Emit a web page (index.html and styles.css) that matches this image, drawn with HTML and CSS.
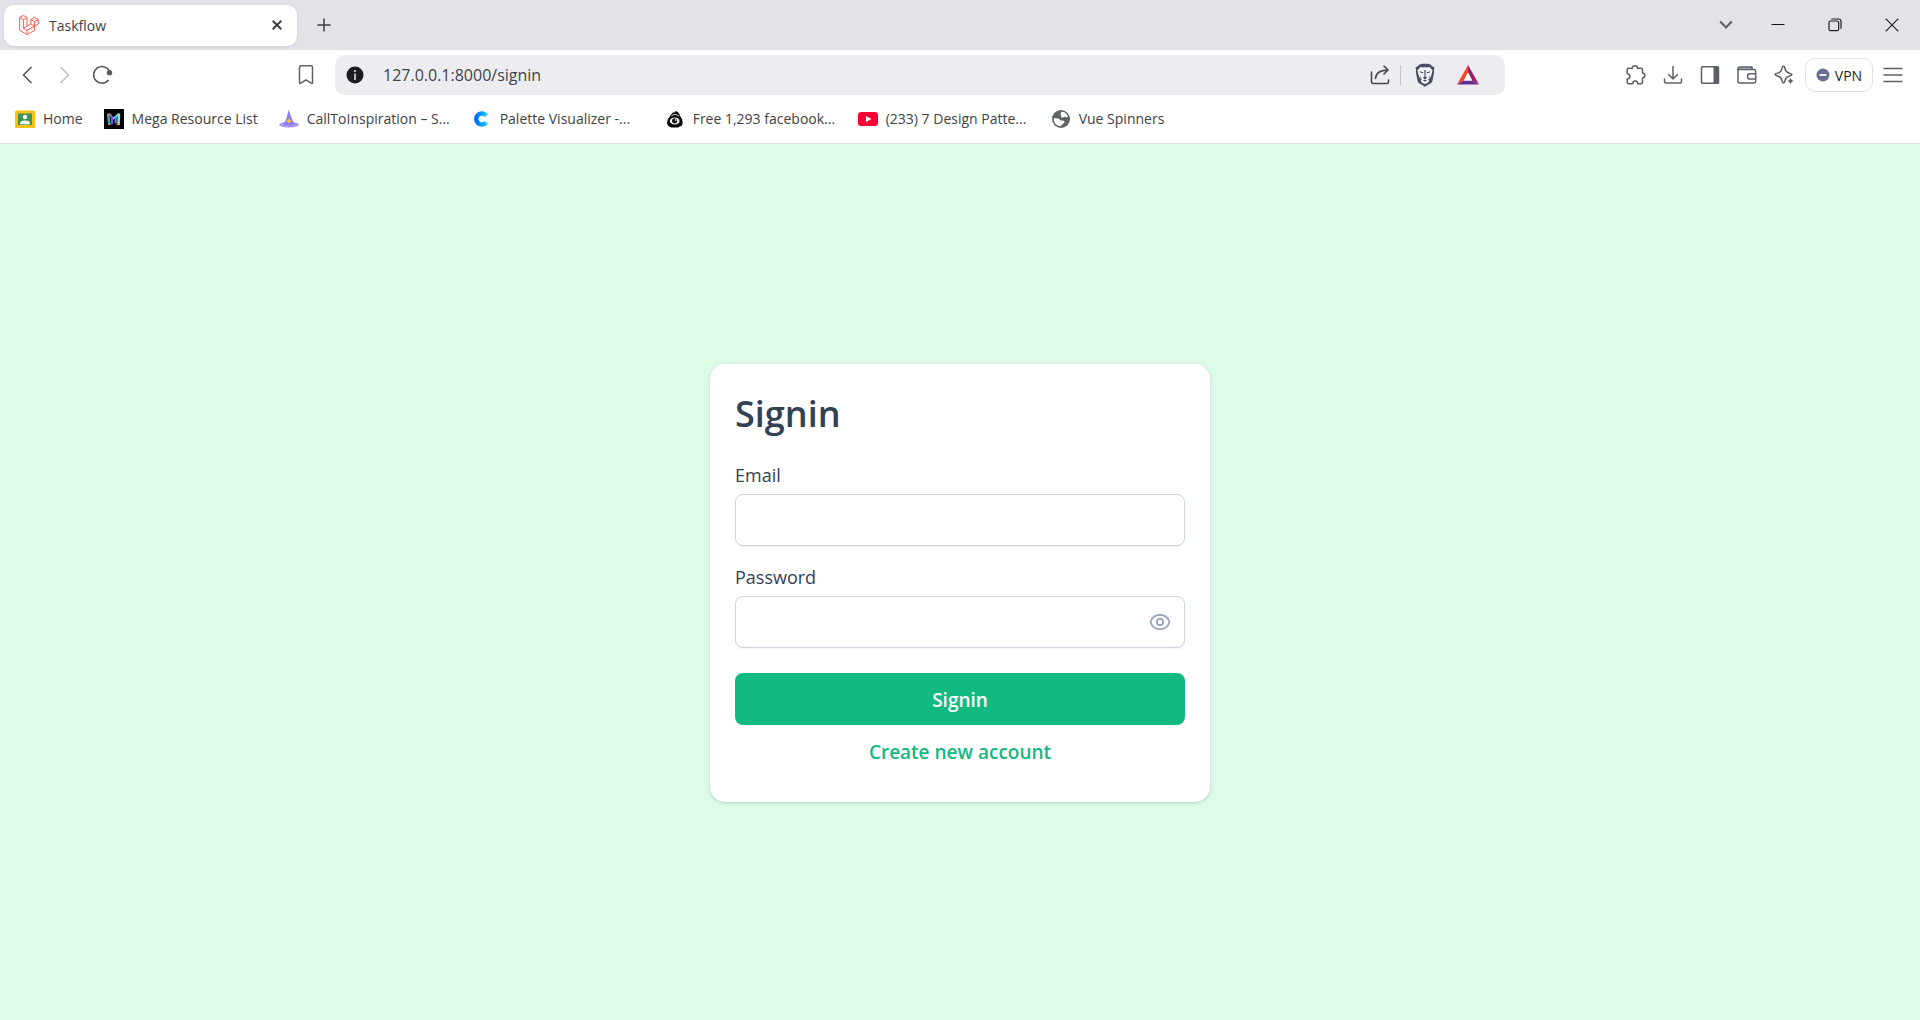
FILE: index.html
```html
<!DOCTYPE html>
<html lang="en">
<head>
<meta charset="utf-8">
<meta name="viewport" content="width=device-width, initial-scale=1">
<title>Taskflow</title>
<link rel="stylesheet" href="styles.css">
</head>
<body>
<div class="window">
  <header class="chrome">
    <div class="tabbar">
      <div class="tab">
        <svg class="icon-20" viewBox="0 0 24 24" fill="none" stroke="#ff4a3d" stroke-width="1.1" stroke-linejoin="round"><path d="M.8 3 5.2.5 9.7 3 5.2 5.6zM.8 3v15.4l8.9 5.1 9-5.1v-5.1l4.5-2.6V5.5l-4.5-2.6-4.5 2.6 4.5 2.6 4.5-2.6M14.200 5.500v5.200l4.500 2.600V8.100M9.700 3v10.300l4.500-2.600M5.200 5.600v10.300l4.500-2.600M5.200 15.900l4.500 2.500 9-5.100M9.700 18.400v5.100"/></svg>
        <span class="tab-title">Taskflow</span>
        <button class="tab-close" type="button" aria-label="Close tab"><svg width="10" height="10" viewBox="0 0 10 10" stroke="#3b3e43" stroke-width="2"><path d="M.7.7l8.600 8.600M9.300.7.7 9.300"/></svg></button>
      </div>
      <button class="tool" type="button" aria-label="New tab"><svg width="14" height="14" viewBox="0 0 14 14" stroke="#3b3e43" stroke-width="1.500"><path d="M7 .5v13M.5 7h13"/></svg></button>
      <div class="window-controls">
        <button class="control control-search" type="button" aria-label="Search tabs"><svg width="14" height="10" viewBox="0 0 14 10" fill="none" stroke="#5d6167" stroke-width="2.200"><path d="M1.200 1.500 7 7.500l5.800-6"/></svg></button>
        <button class="control" type="button" aria-label="Minimize"><svg width="14" height="14" viewBox="0 0 14 14" stroke="#111"><path d="M.5 6.500h13"/></svg></button>
        <button class="control" type="button" aria-label="Restore"><svg width="14" height="14" viewBox="0 0 14 14" fill="none" stroke="#222" stroke-width="1.200"><rect x="1" y="3" width="9.700" height="9.700" rx="1.500"/><path d="M3.200 1h7.300Q13 1 13 3.500v7.200"/></svg></button>
        <button class="control" type="button" aria-label="Close"><svg width="14" height="14" viewBox="0 0 14 14" stroke="#222" stroke-width="1.200"><path d="M.7.7l12.600 12.600M13.300.7.7 13.300"/></svg></button>
      </div>
    </div>

    <div class="toolbar">
      <button class="tool" type="button" aria-label="Back"><svg class="icon-20" viewBox="0 0 20 20" fill="none" stroke="#55585e" stroke-width="1.600"><path d="M14.500 2 6.500 10l8 8"/></svg></button>
      <button class="tool" type="button" aria-label="Forward"><svg class="icon-20" viewBox="0 0 20 20" fill="none" stroke="#bfc0c4" stroke-width="1.600"><path d="M5.500 2l8 8-8 8"/></svg></button>
      <button class="tool" type="button" aria-label="Reload"><svg class="icon-20" viewBox="0 0 20 20" fill="none" stroke="#55585e" stroke-width="1.600"><path d="M15.500 15A8.300 8.300 0 1 1 16.300 6"/><circle cx="16.500" cy="7.700" r="1.900" fill="#55585e" stroke="#55585e"/></svg></button>
      <div class="space-left"></div>
      <button class="tool" type="button" aria-label="Bookmark this page"><svg class="icon-20" viewBox="0 0 20 20" fill="none" stroke="#5d6167" stroke-width="1.500" stroke-linejoin="round"><path d="M3.500 2.300q0-1.500 1.500-1.500h10q1.500 0 1.500 1.500v15.200q0 1.500-1.300.7L10 14.800l-5.200 3.400q-1.300.8-1.300-.7z"/></svg></button>
      <div class="address">
        <button class="site-info" type="button" aria-label="Site information"><svg width="18" height="18" viewBox="0 0 18 18"><circle cx="9" cy="9" r="8.500" fill="#1b1b22"/><path d="M8 4h2v2H8zM8 7.500h2V14H8z" fill="#b9b9c0"/></svg></button>
        <input class="url" type="text" aria-label="Address" value="127.0.0.1:8000/signin">
        <button class="share" type="button" aria-label="Share"><svg class="icon-20" viewBox="0 0 20 20" fill="none" stroke="#46474d" stroke-width="1.600" stroke-linecap="round" stroke-linejoin="round"><path d="M1.500 7v10q0 1.500 1.500 1.500h14q1.500 0 1.500-1.500v-2M5.500 13.500Q6 5.500 17.500 5M14 1l4 4-4 4"/></svg></button>
        <span class="divider"></span>
        <button class="shield" type="button" aria-label="Brave Shields"><svg width="20" height="24" viewBox="0 0 20 24"><path d="M4.500 1.500 7 .8h6l2.500.7 2 2 2 .8-.6 3 .3 1.500-1.700 9q-.4 1.500-1.700 2.500L10 23.700l-5.800-3.400q-1.300-1-1.700-2.500l-1.700-9 .3-1.500-.6-3 2-.8z" fill="#4b4d63"/><path d="M5.500 4 8 4.500l2-.3 2 .3 2.500-.5 3 3.300-.4 2-1.300 4.600-2.600 2.600 1 1-1.200 2.200L10 21l-3-1.300-1.200-2.200 1-1-2.600-2.600-1.300-4.600-.4-2z" fill="#f5f5f8"/><path d="M4.500 8.200l4 1.100-.6 1-2.900-.8zM15.500 8.200l-4 1.100.6 1 2.900-.8zM9.300 7h1.400l-.2 6.500 1.800 1.200-2.300 1.500-2.300-1.500 1.800-1.200zM7.800 17.400l2.200-.8 2.200.8-2.200 1.200zM4.600 12l1.600 2.200-.8.3zM15.400 12l-1.600 2.200.8.3z" fill="#4b4d63"/></svg></button>
        <button class="tool" type="button" aria-label="Brave Rewards"><svg width="24" height="20" viewBox="0 0 24 20"><path d="M12 0 1 19.500 7.800 15.600 12 7.500z" fill="#ff4724"/><path d="M12 0l11 19.500-6.800-3.900L12 7.500z" fill="#9e1f63"/><path d="M1 19.500h22l-6.800-3.900H7.800z" fill="#662d91"/><path d="M12 7.500l4.200 8.100H7.800z" fill="#fff"/></svg></button>
      </div>
      <div class="space-right"></div>
      <div class="actions">
        <button class="action" type="button" aria-label="Extensions"><svg class="icon-20" viewBox="0 0 20 20" fill="none" stroke="#5d6167" stroke-width="1.500" stroke-linejoin="round"><path d="M1.200 4.500q0-1.300 1.300-1.300h3.800C6.300 0 11.500 0 11.500 3.200h3.700q1.300 0 1.300 1.300V8c3.200.3 3.200 4.600 0 5v4.200q0 1.500-1.500 1.500h-3.200c-.2-3.500-4.800-3.500-5 0H2.700q-1.500 0-1.500-1.500V14c3.600-.2 3.600-5 0-5.200z"/></svg></button>
        <button class="action" type="button" aria-label="Downloads"><svg class="icon-20" viewBox="0 0 20 20" fill="none" stroke="#5d6167" stroke-width="1.500" stroke-linecap="round" stroke-linejoin="round"><path d="M10 1.500V14M5.500 9.500 10 14l4.500-4.500M1.500 14v2.500q0 1.500 1.500 1.500h14q1.500 0 1.500-1.500V14"/></svg></button>
        <button class="action" type="button" aria-label="Sidebar"><svg class="icon-20" viewBox="0 0 20 20"><rect x="1.500" y="1.700" width="17" height="16.500" rx="1" fill="none" stroke="#5d6167" stroke-width="1.500"/><path d="M13.500 1.500h5v17h-5z" fill="#5d6167"/></svg></button>
        <button class="action" type="button" aria-label="Wallet"><svg class="icon-20" viewBox="0 0 20 20" fill="none" stroke="#5d6167" stroke-width="1.500" stroke-linejoin="round"><path d="M1 4.500V4q0-2 2-2h12v2.500" fill="#b9bbbf"/><path d="M1 4.500h16q1.700 0 1.700 1.700v10.100q0 1.700-1.700 1.700H3q-2 0-2-2V4.500zM18.700 8.700h-6q-2.200 0-2.200 2.700t2.200 2.700h6"/></svg></button>
        <button class="action" type="button" aria-label="Leo AI"><svg class="icon-20" viewBox="0 0 20 20" fill="none" stroke="#5d6167" stroke-width="1.500" stroke-linejoin="round"><path d="M9.500 1.300q1.200 0 1.600 2.500.7 3.600 4.300 4.400 2.600.6 2.600 1.400t-2.500 1.400q-3.700.9-4.400 4.300-.5 2.600-1.600 2.600t-1.600-2.600q-.7-3.500-4.400-4.300Q1 10.500 1 9.600t2.600-1.400q3.500-.8 4.300-4.400.5-2.500 1.600-2.500z"/><path d="M16.500 12l1.200 2.800 2.300 1.200-2.300 1.200-1.200 2.800-1.200-2.800L13 16l2.300-1.200z" fill="#5d6167" stroke="#fff" stroke-width=".5"/></svg></button>
      </div>
      <button class="vpn" type="button"><svg width="14" height="14" viewBox="0 0 14 14"><circle cx="7" cy="7" r="6.500" fill="#6b6f8d"/><path d="M3.500 7h7" stroke="#fff" stroke-width="1.800"/></svg>VPN</button>
      <button class="tool" type="button" aria-label="Menu"><svg class="icon-20" viewBox="0 0 20 20" stroke="#5d6167" stroke-width="1.500"><path d="M.5 3.500h19M.5 10h19M.5 16.500h19"/></svg></button>
    </div>

    <nav class="bookmarks" aria-label="Bookmarks">
      <a class="bookmark" href="#"><svg class="icon-20" viewBox="0 0 20 20"><rect y="1.500" width="20" height="17.500" rx="1.500" fill="#fbc017"/><path d="M3 4.500h14v11.500H3z" fill="#3c9453"/><circle cx="10" cy="8" r="2.200" fill="#fff"/><path d="M5 14.500q0-3 5-3t5 3v.7H5z" fill="#fff"/></svg><span>Home</span></a>
      <a class="bookmark" href="#"><svg class="icon-20" viewBox="0 0 20 20" fill="none" stroke-width="2"><path d="M0 0h20v20H0z" fill="#000"/><path d="M4 4.500 5.500 16" stroke="#3aa9b8" stroke-width="2.500"/><path d="M5 4.500 9.500 10" stroke="#e0607c"/><path d="M9 10l6-5" stroke="#5fe0c8"/><path d="M8 7v8" stroke="#7a56e6"/><path d="M12 8l-.5 6" stroke="#4f8cf0"/><path d="M15 4.500 14.500 16" stroke="#8fdfe6" stroke-width="2.500"/><path d="M13 12v4.500M4 15.500h3" stroke="#e8734f" stroke-width="1"/></svg><span>Mega Resource List</span></a>
      <a class="bookmark bookmark-long" href="#"><svg class="icon-20" viewBox="0 0 20 20"><ellipse cx="10" cy="15.700" rx="10" ry="2.800" fill="#a596f5"/><path d="M9.700.8Q11 4 12.200 8t3.500 7q-5.500 3-11.700 0 3-3 4-7.500T9.700.8z" fill="#8b7cf0"/><path d="M10 9l.9 2 2 1-2 1-.9 2-.9-2-2-1 2-1z" fill="#f8c93a"/></svg><span>CallToInspiration – S...</span></a>
      <a class="bookmark bookmark-long" href="#"><svg class="icon-20" viewBox="0 0 20 20"><defs><linearGradient id="palette"><stop stop-color="#006cff"/><stop offset="1" stop-color="#14cfff"/></linearGradient></defs><path d="M14.200 6.700A5.500 5.500 0 1 0 14.200 13.300" fill="none" stroke="url(#palette)" stroke-width="4.500"/></svg><span>Palette Visualizer -...</span></a>
      <a class="bookmark bookmark-long" href="#"><svg class="icon-20" viewBox="0 0 20 20"><path d="M4.500 8Q5.500 5.500 8 3.500l2-.2L10.500 2Q14 2.500 15 7q3 3 2.500 8l-1.200 2.500-1-.5-2 1.500H6.500Q2 17.500 2 13.500 2 10 4.500 8z" fill="#080808"/><ellipse cx="9.700" cy="12" rx="4.800" ry="3.600" fill="#fff"/><circle cx="9.700" cy="11.800" r="2.600" fill="#080808"/><circle cx="10.600" cy="10.900" r=".9" fill="#fff"/><path d="M6 7.200q4-3.500 8 0" fill="none" stroke="#fff" stroke-width=".8"/></svg><span>Free 1,293 facebook...</span></a>
      <a class="bookmark bookmark-long" href="#"><svg class="icon-20" viewBox="0 0 20 20"><rect y="3" width="20" height="14" rx="3" fill="#ff0033"/><path d="M8 7l5.500 3L8 13z" fill="#fff"/></svg><span>(233) 7 Design Patte...</span></a>
      <a class="bookmark bookmark-long" href="#"><svg class="icon-20" viewBox="0 0 20 20"><circle cx="10" cy="10" r="9" fill="#5f6368"/><path d="M10.500 2.800q4.800.2 6.500 4.700-1.200 1.700-2.700.3-1.300-.4-1.800.7h-2.300V6.200q-1.500-1-.5-2.200zM2.800 9.200q2.700.1 4.500.3 1.500.3 1.700 1.900l3 .2q1.600.4 1.500 2.200-1.700.4-2 1.700-1.400.2-1.700 1.700Q4 16.700 2.800 11.500z" fill="#fff"/></svg><span>Vue Spinners</span></a>
    </nav>
  </header>

  <main class="page">
    <form class="card">
      <h1 class="title">Signin</h1>
      <div class="field">
        <label class="label" for="email">Email</label>
        <input class="input" id="email" type="email">
      </div>
      <div class="field">
        <label class="label" for="password">Password</label>
        <div class="password">
          <input class="input" id="password" type="password">
          <button class="reveal" type="button" aria-label="Show password"><svg width="24" height="24" viewBox="0 0 24 24" fill="none" stroke="#94a3b8" stroke-width="1.700"><path d="M2.700 12.500a1.500 1.500 0 0 1 0-1C4 7.600 7.700 4.900 12 4.900s8 2.700 9.300 6.600q.2.500 0 1C20 16.400 16.300 19.100 12 19.100s-8-2.700-9.300-6.600z"/><circle cx="12" cy="12" r="3.200"/></svg></button>
        </div>
      </div>
      <button class="submit" type="submit">Signin</button>
      <a class="create" href="#">Create new account</a>
    </form>
  </main>
</div>
</body>
</html>
```

FILE: styles.css
```css
* {
  box-sizing: border-box;
}

body {
  margin: 0;
  font-family: "Open Sans", "Noto Sans", sans-serif;
  color: #334155;
}

button {
  margin: 0;
  padding: 0;
  border: 0;
  background: transparent;
  color: inherit;
  font-family: inherit;
}

svg {
  display: block;
  flex: none;
}

.icon-20 {
  width: 20px;
  height: 20px;
}

.window {
  display: flex;
  flex-direction: column;
  min-height: 100vh;
}

/* Browser frame */
.chrome {
  background: #fff;
  border-bottom: 1px solid #dfdfe3;
  color: #404247;
  font-size: 14px;
}

.tabbar {
  display: flex;
  align-items: center;
  height: 50px;
  padding-left: 4px;
  gap: 8px;
  background: #e3e2e8;
}

.tab {
  display: flex;
  align-items: center;
  gap: 10px;
  width: 293px;
  height: 41px;
  padding: 0 10px 0 15px;
  border-radius: 10px;
  background: #fff;
  box-shadow: 0 1px 3px rgba(0, 0, 0, 0.08);
}

.tab-title {
  flex: 1;
}

.tab-close {
  display: grid;
  place-items: center;
  width: 20px;
  height: 20px;
}

.window-controls {
  display: flex;
  margin-left: auto;
}

.control {
  display: grid;
  place-items: center;
  width: 57px;
  height: 50px;
}

.control-search {
  width: 46px;
}

.toolbar {
  display: flex;
  align-items: center;
  height: 50px;
  padding: 0 8px;
}

.tool {
  display: grid;
  flex: none;
  place-items: center;
  width: 38px;
  height: 38px;
}

.space-left {
  flex: 0 1 165px;
}

.space-right {
  flex: 0 1 112px;
}

.address {
  display: flex;
  flex: 1;
  align-items: center;
  height: 40px;
  margin-left: 10px;
  padding: 0 18px 0 11px;
  border-radius: 10px;
  background: #ededf1;
}

.site-info {
  flex: none;
}

.url {
  flex: 1;
  min-width: 0;
  margin-left: 19px;
  padding: 0;
  border: 0;
  outline: 0;
  background: transparent;
  color: #404247;
  font-family: inherit;
  font-size: 16px;
}

.share {
  padding: 0 10px;
}

.divider {
  width: 1px;
  height: 20px;
  background: #c3c3c9;
}

.shield {
  display: grid;
  place-items: center;
  width: 48px;
  height: 38px;
}

.actions {
  display: flex;
  flex: none;
}

.action {
  display: grid;
  place-items: center;
  width: 37px;
  height: 38px;
}

.vpn {
  display: flex;
  flex: none;
  align-items: center;
  justify-content: center;
  gap: 5px;
  width: 68px;
  height: 34px;
  margin: 0 1px 0 3px;
  border: 1px solid #e2e2e6;
  border-radius: 10px;
  color: #1e1f24;
  font-size: 14px;
}

.bookmarks {
  display: flex;
  align-items: center;
  gap: 21px;
  height: 43px;
  padding: 0 15px 6px;
}

.bookmark {
  display: flex;
  align-items: center;
  gap: 8px;
  color: inherit;
  text-decoration: none;
  white-space: nowrap;
}

.bookmark-long {
  width: 172px;
}

/* Sign-in page */
.page {
  display: flex;
  flex: 1;
  align-items: center;
  justify-content: center;
  padding: 26px 24px 24px;
  background: #dcfce7;
}

.card {
  display: flex;
  flex-direction: column;
  width: 100%;
  max-width: 500px;
  padding: 25px 25px 35px;
  border-radius: 15px;
  background: #fff;
  box-shadow: 0 1px 4px rgba(0, 0, 0, 0.12), 0 1px 2px rgba(0, 0, 0, 0.06);
}

.title {
  margin: 0 0 20px;
  font-size: 36px;
  font-weight: 600;
  line-height: 50px;
}

.field {
  display: flex;
  flex-direction: column;
  gap: 3px;
  margin-bottom: 15px;
}

.label {
  font-size: 18px;
  line-height: 32px;
}

.input {
  width: 100%;
  height: 52px;
  padding: 0 15px;
  border: 1px solid #cbd5e1;
  border-radius: 8px;
  background: #fff;
  box-shadow: 0 1px 2px rgba(0, 0, 0, 0.05);
  color: inherit;
  font-family: inherit;
  font-size: 18px;
}

.password {
  position: relative;
}

.reveal {
  position: absolute;
  top: 14px;
  right: 13px;
}

.submit {
  height: 52px;
  margin: 10px 0 12px;
  padding-top: 2px;
  border-radius: 8px;
  background: #12b981;
  color: #fff;
  font-size: 19px;
  font-weight: 600;
}

.create {
  align-self: center;
  color: #12b981;
  font-size: 19px;
  font-weight: 600;
  line-height: 30px;
  text-decoration: none;
}
```
